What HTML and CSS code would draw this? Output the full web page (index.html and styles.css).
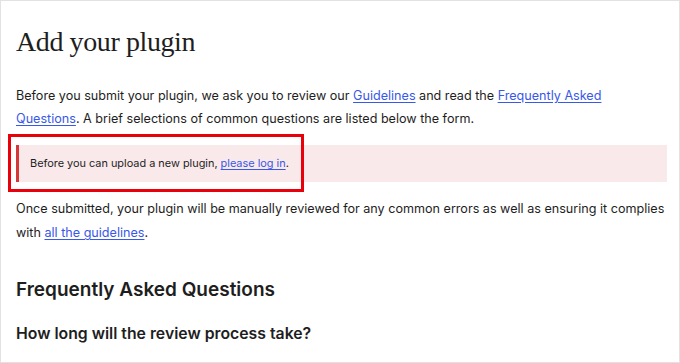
FILE: index.html
```html
<!DOCTYPE html>
<html lang="en">
<head>
  <meta charset="UTF-8" />
  <meta name="viewport" content="width=device-width, initial-scale=1.0"/>
  <title>Add your plugin</title>
  <link rel="stylesheet" href="styles.css">
</head>
<body>
  <div class="page">
    <h1>Add your plugin</h1>

    <p>Before you submit your plugin, we ask you to review our <a href="#">Guidelines</a> and read the <a href="#">Frequently Asked Questions</a>. A brief selections of common questions are listed below the form.</p>

    <div class="notice">
      <p>Before you can upload a new plugin, <a href="#">please log in</a>.</p>
      <span class="highlight"></span>
    </div>

    <p>Once submitted, your plugin will be manually reviewed for any common errors as well as ensuring it complies with <a href="#">all the guidelines</a>.</p>

    <h2>Frequently Asked Questions</h2>

    <h3>How long will the review process take?</h3>
  </div>
</body>
</html>
```

FILE: styles.css
```css
body {
  margin: 0;
  font-family: Inter, "Noto Sans", sans-serif;
  color: #1e1e1e;
  background-color: white;
}

.page {
  box-sizing: border-box;
  height: 363px;
  overflow: hidden;
  border: 1px solid #e2e2e2;
  padding: 0 12px 0 15px;
}

h1 {
  font-family: "Liberation Serif", serif;
  font-weight: normal;
  font-size: 28px;
  letter-spacing: -0.4px;
  line-height: 34px;
  margin: 23.5px 0 25px;
}

p {
  font-size: 12.6px;
  line-height: 23.5px;
  margin: 0 0 14.3px;
}

a {
  color: #3858e9;
  text-decoration: underline;
  text-underline-offset: 1.5px;
}

.notice {
  position: relative;
  background-color: #f9e9ea;
  border-left: 3px solid #d63638;
  padding: 8.5px 12px 8.5px 11px;
  margin-bottom: 15.7px;
}

.notice p {
  font-size: 10.9px;
  line-height: 20px;
  margin: 0;
}

/* red annotation frame drawn over the notice */
.highlight {
  position: absolute;
  top: -11px;
  left: -11px;
  width: 296px;
  height: 58px;
  box-sizing: border-box;
  border: 3px solid #e8000b;
}

h2 {
  font-size: 19px;
  font-weight: 600;
  line-height: 26px;
  margin: 32.4px 0 20px;
}

h3 {
  font-size: 15.8px;
  font-weight: 600;
  line-height: 22px;
  margin: 0;
}
```
